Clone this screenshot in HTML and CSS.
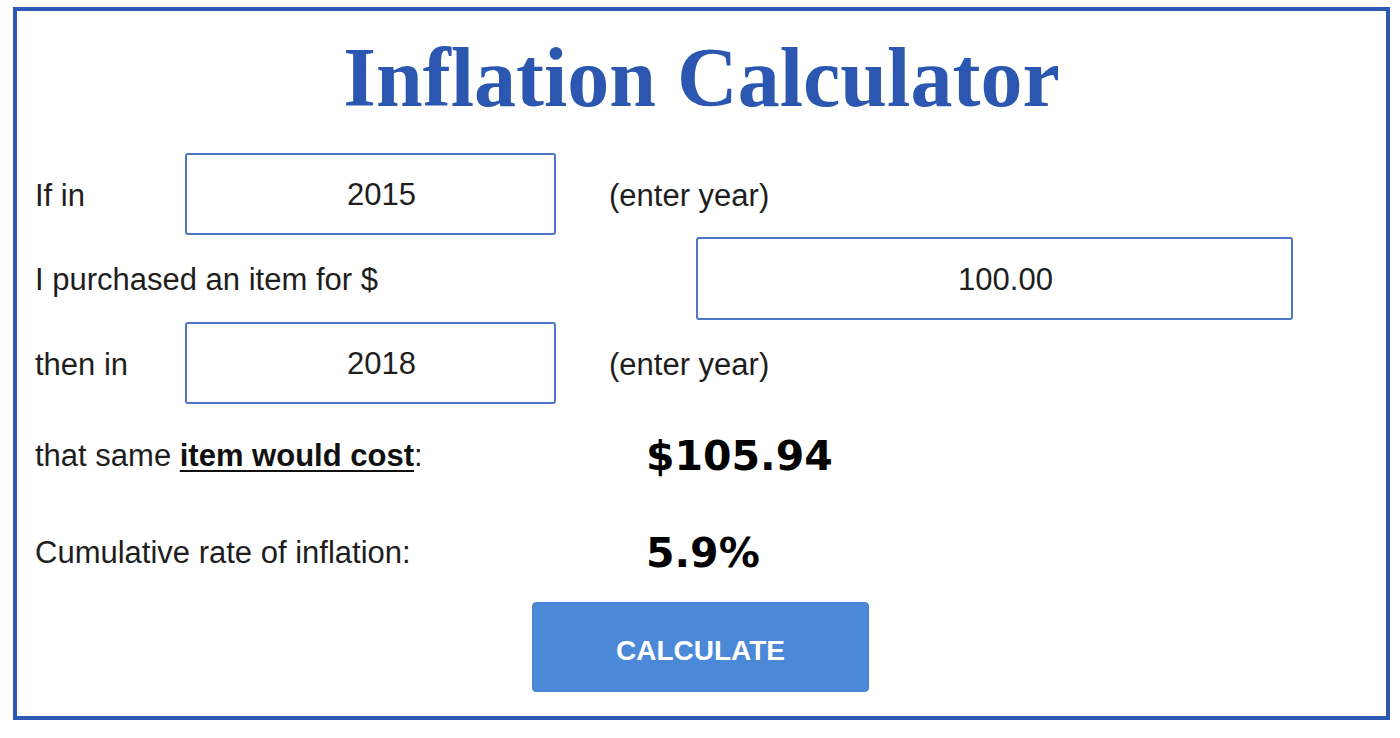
FILE: index.html
```html
<!DOCTYPE html>
<html lang="en">
<head>
<meta charset="utf-8">
<title>Inflation Calculator</title>
<link rel="stylesheet" href="styles.css">
</head>
<body>
<div class="calc">
  <h1 class="title">Inflation Calculator</h1>
  <div class="row row-year">
    <label class="label label-short">If in</label>
    <input class="field field-year" type="text" value="2015">
    <span class="hint">(enter year)</span>
  </div>
  <div class="row row-amount">
    <label class="label label-long">I purchased an item for $</label>
    <input class="field field-amount" type="text" value="100.00">
  </div>
  <div class="row row-year">
    <label class="label label-short">then in</label>
    <input class="field field-year" type="text" value="2018">
    <span class="hint">(enter year)</span>
  </div>
  <div class="row result result-cost">
    <span class="label label-result">that same <b class="em">item would cost</b>:</span>
    <span class="value">$105.94</span>
  </div>
  <div class="row result result-rate">
    <span class="label label-result">Cumulative rate of inflation:</span>
    <span class="value">5.9%</span>
  </div>
  <div class="actions">
    <button class="btn" type="button">CALCULATE</button>
  </div>
</div>
</body>
</html>
```
FILE: styles.css
```css
html, body {
  margin: 0;
  padding: 0;
  background: #ffffff;
}

body {
  padding: 7px 0 0 13px;
}

.calc {
  box-sizing: border-box;
  width: 1377px;
  height: 713px;
  border: 4px solid #2c59b3;
  padding: 17px 0 0 18px;
  font-family: "Liberation Sans", Arial, sans-serif;
  color: #1e1e1e;
}

.title {
  margin: 0 0 0 -18px;
  text-align: center;
  font-family: "Liberation Serif", "Times New Roman", serif;
  font-weight: bold;
  font-size: 84px;
  line-height: 100px;
  color: #2b57b1;
  height: 125px;
}

.row {
  display: flex;
  align-items: center;
}

.row-year,
.row-amount {
  margin-bottom: 2px;
}

.label {
  font-size: 31px;
  line-height: 36px;
}

.label-short {
  width: 150px;
  flex: none;
  padding-top: 3px;
}

.label-long {
  width: 661px;
  flex: none;
  padding-top: 3px;
}

.field {
  box-sizing: border-box;
  height: 82px;
  border: 2px solid #4f75c6;
  border-radius: 3px;
  background: #ffffff;
  text-align: center;
  font-family: "Liberation Sans", Arial, sans-serif;
  font-size: 31px;
  color: #1e1e1e;
  padding: 2px 0 0 22px;
  margin: 0;
  outline: none;
}

.field-year {
  width: 371px;
}

.field-amount {
  width: 597px;
  height: 83px;
}

.hint {
  margin-left: 53px;
  font-size: 31px;
  line-height: 36px;
  padding-top: 3px;
}

.result {
  height: 60px;
}

.result-cost {
  margin-top: 22px;
}

.result-rate {
  margin-top: 37px;
}

.label-result {
  width: 611px;
  flex: none;
}

.em {
  font-weight: bold;
  text-decoration: underline;
  text-decoration-thickness: 2px;
  text-underline-offset: 4px;
  color: #111111;
}

.value {
  font-family: "DejaVu Sans", Verdana, sans-serif;
  font-weight: bold;
  font-size: 41px;
  color: #000000;
}

.actions {
  display: flex;
  justify-content: center;
  margin-top: 19px;
  margin-left: -20px;
}

.btn {
  box-sizing: border-box;
  width: 337px;
  height: 90px;
  border: 1px solid #4683d0;
  border-radius: 4px;
  background: #4b89d8;
  color: #ffffff;
  font-family: "Liberation Sans", Arial, sans-serif;
  font-weight: bold;
  font-size: 28px;
  padding: 8px 0 0 0;
  cursor: pointer;
}
```
